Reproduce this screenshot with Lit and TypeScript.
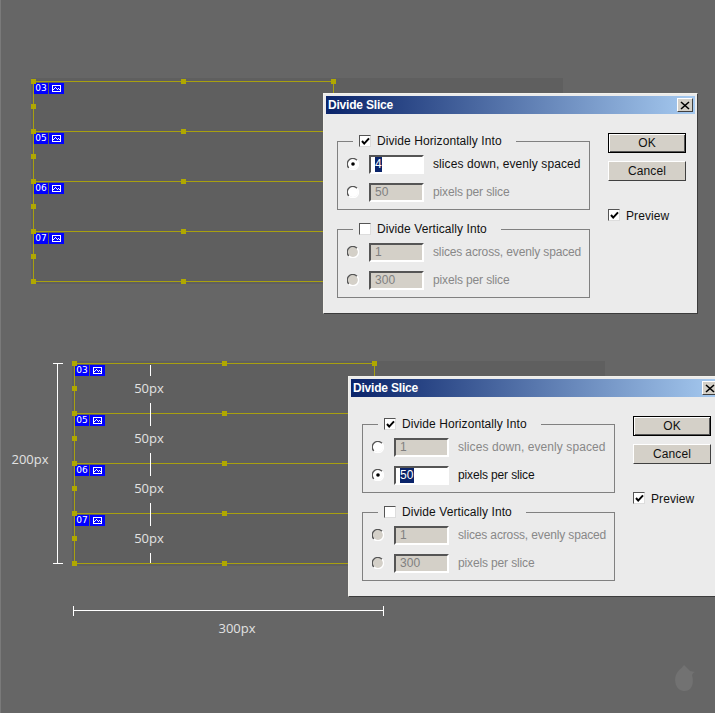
import { LitElement, html, css, svg } from "lit";
import { customElement, property } from "lit/decorators.js";

const SLICES = ["03", "05", "06", "07"];

@customElement("slice-diagram")
class SliceDiagram extends LitElement {
  static styles = css`
    :host { display: block; width: 301px; height: 201px; position: relative; box-sizing: border-box; border: 1px solid #a8a010; border-top: 0; font-family: "DejaVu Sans", sans-serif; }
    .slice { height: 50px; box-sizing: border-box; border-top: 1px solid #a8a010; padding: 1px 0 0 0; display: flex; gap: 1px; align-items: flex-start; }
    .tile { height: 11px; background: #0000ff; color: #fff; display: flex; align-items: center; justify-content: center; }
    .num { width: 14px; font-size: 9px; line-height: 11px; }
    .img { width: 15px; }
    .h { position: absolute; width: 5px; height: 5px; background: #b0a800; }
    svg { display: block; }
  `;
  render() {
    const pts: [number, number][] = [];
    for (let y = 0; y <= 200; y += 50) {
      pts.push([-3, y - 2], [147, y - 2], [297, y - 2]);
      if (y < 200) pts.push([-3, y + 23]);
    }
    return html`
      ${SLICES.map((n) => html`<div class="slice">
        <div class="tile num">${n}</div>
        <div class="tile img"><svg width="9" height="7" viewBox="0 0 9 7" shape-rendering="crispEdges"><rect x=".5" y=".5" width="8" height="6" fill="none" stroke="#fff"/><path d="M1 4h1v1H1zM2 3h1v1H2zM3 2h1v1H3zM4 3h1v1H4zM5 4h1v1H5zM6 3h1v1H6zM7 4h1v1H7z" fill="#fff"/></svg></div>
      </div>`)}
      ${pts.map(([x, y]) => html`<i class="h" style="left:${x}px;top:${y}px"></i>`)}
    `;
  }
}

const check = svg`<path d="M2 5 4.2 7.6 9 2.4" fill="none" stroke="#000" stroke-width="2"/>`;

@customElement("divide-dialog")
class DivideDialog extends LitElement {
  @property({ type: Number }) active = 0;
  @property() value = "4";
  @property() other = "50";

  static styles = css`
    :host { display: block; box-sizing: border-box; width: 375px; height: 221px; padding: 2px; background: #ebebeb; border: 1px solid; border-color: #f2f1ec #3c3c3c #3c3c3c #f2f1ec; font-family: "Liberation Sans", sans-serif; font-size: 12px; letter-spacing: 0.08px; color: #111; }
    .title { height: 18px; box-sizing: border-box; padding: 0 2px 0 2px; display: flex; align-items: center; justify-content: space-between; background: linear-gradient(90deg, #0a246a, #a6caf0); color: #fff; font: bold 12px "Liberation Sans", sans-serif; letter-spacing: -0.2px; }
    .close { width: 16px; height: 14px; box-sizing: border-box; background: #d4d0c8; border: 1px solid; border-color: #fff #404040 #404040 #fff; display: flex; align-items: center; justify-content: center; }
    .body { display: flex; gap: 18px; padding: 20px 0 0 11px; }
    .groups { width: 253px; display: flex; flex-direction: column; gap: 12px; }
    fieldset { margin: 0; padding: 7px 0 7px 9px; border: 1px solid #808080; display: flex; flex-direction: column; gap: 9px; min-width: 0; }
    legend { margin-left: 6px; padding: 0 14px 0 6px; height: 14px; display: flex; align-items: center; gap: 6px; }
    .row { display: flex; align-items: center; height: 19px; }
    .radio { margin: 0 10px 2px 0; display: block; flex: none; }
    .field { width: 55px; height: 19px; box-sizing: border-box; flex: none; margin-right: 9px; border: 2px solid; border-color: #555 #fff #fff #555; background: #d4d0c8; color: #808080; padding: 0 0 0 4px; line-height: 15px; }
    .field.on { background: #fff; color: #000; }
    .sel { background: #0a246a; color: #fff; display: inline-block; }
    .off { color: #888; }
    .lbl { padding-bottom: 1px; }
    .tight { letter-spacing: -0.14px; }
    .box { width: 12px; height: 12px; box-sizing: border-box; flex: none; background: #fff; border: 1px solid; border-color: #555 #ddd #ddd #555; }
    .box svg { display: block; }
    .side { width: 78px; margin-top: -1px; display: flex; flex-direction: column; }
    .btn { height: 20px; box-sizing: border-box; background: #d4d0c8; border: 1px solid; border-color: #fff #404040 #404040 #fff; display: flex; align-items: center; justify-content: center; }
    .btn.def { border: 1px solid #000; box-shadow: inset 1px 1px 0 #fff, inset -1px -1px 0 #555; }
    .cancel { margin-top: 8px; }
    .prev { margin-top: 28px; height: 12px; display: flex; align-items: center; gap: 6px; }
    .prev span:last-child { padding-top: 1px; }
  `;

  private radio(on: boolean, enabled: boolean) {
    return html`<svg class="radio" width="12" height="12" viewBox="0 0 12 12">
      <circle cx="6" cy="6" r="5" fill="${enabled ? "#fff" : "#d4d0c8"}"/>
      <path d="M10 2.2A5.4 5.4 0 0 0 1.8 10" fill="none" stroke="#555" stroke-width="1.3"/>
      <path d="M10 2.2A5.4 5.4 0 0 1 1.8 10" fill="none" stroke="#fff" stroke-width="1.3"/>
      ${on ? svg`<circle cx="6" cy="6" r="1.8" fill="#000"/>` : null}
    </svg>`;
  }
  private box(on: boolean) {
    return html`<span class="box">${on ? html`<svg width="10" height="10" viewBox="0 0 10 10">${check}</svg>` : null}</span>`;
  }
  private row(enabled: boolean, selected: boolean, value: string, label: string, tight = false) {
    return html`<div class="row">
      ${this.radio(selected, enabled)}
      <div class="field ${selected ? "on" : ""}">${selected ? html`<span class="sel">${value}</span>` : value}</div>
      <span class="lbl ${selected ? "" : "off"} ${tight ? "tight" : ""}">${label}</span>
    </div>`;
  }
  render() {
    const a = this.active;
    return html`
      <div class="title"><span>Divide Slice</span>
        <span class="close"><svg width="10" height="9" viewBox="0 0 10 9"><path d="M1 1 9 8M9 1 1 8" stroke="#000" stroke-width="1.6"/></svg></span>
      </div>
      <div class="body">
        <div class="groups">
          <fieldset>
            <legend>${this.box(true)}<span>Divide Horizontally Into</span></legend>
            ${this.row(true, a === 0, a === 0 ? this.value : "1", "slices down, evenly spaced")}
            ${this.row(true, a === 1, a === 1 ? this.value : this.other, "pixels per slice", true)}
          </fieldset>
          <fieldset>
            <legend>${this.box(false)}<span>Divide Vertically Into</span></legend>
            ${this.row(false, false, "1", "slices across, evenly spaced", true)}
            ${this.row(false, false, "300", "pixels per slice", true)}
          </fieldset>
        </div>
        <div class="side">
          <div class="btn def">OK</div>
          <div class="btn cancel">Cancel</div>
          <div class="prev">${this.box(true)}<span>Preview</span></div>
        </div>
      </div>
    `;
  }
}

@customElement("app-root")
class AppRoot extends LitElement {
  static styles = css`
    :host { display: block; position: relative; width: 715px; height: 713px; overflow: hidden; background: #666666; border-left: 1px solid #7a7a7a; box-sizing: border-box; }
    .art { position: absolute; background: #5f5f5f; }
    .a1 { left: 30px; top: 78px; width: 532px; height: 206px; }
    .a2 { left: 71px; top: 361px; width: 533px; height: 205px; }
    .d1, .d2, .dlg1, .dlg2, .note, .dim { position: absolute; }
    .d1 { left: 32px; top: 81px; }
    .d2 { left: 73px; top: 363px; }
    .dlg1 { left: 322px; top: 93px; }
    .dlg2 { left: 347px; top: 376px; }
    .dim { left: 0; top: 0; }
    .note { color: #e2e2e2; font: 13px "Open Sans", sans-serif; line-height: 18px; transform: translate(-50%, -50%); white-space: nowrap; }
    .mark { position: absolute; left: 671px; top: 663px; }
  `;
  render() {
    const labels: [number, number, string][] = [
      [148, 388, "50px"], [148, 438, "50px"], [148, 488, "50px"], [148, 538, "50px"],
      [29, 459, "200px"], [236, 628, "300px"],
    ];
    return html`
      <div class="art a1"></div>
      <div class="art a2"></div>
      <slice-diagram class="d1"></slice-diagram>
      <slice-diagram class="d2"></slice-diagram>
      <svg class="dim" width="715" height="713" fill="none" stroke="#fff" shape-rendering="crispEdges">
        <path d="M56.5 363V564M52 363.5H62M52 563.5H62"/>
        <path d="M149.5 365V376M149.5 403V426M149.5 453V476M149.5 503V526M149.5 553V563"/>
        <path d="M72 610.5H383M72.5 606V616M382.5 606V616"/>
      </svg>
      ${labels.map(([x, y, t]) => html`<div class="note" style="left:${x}px;top:${y}px">${t}</div>`)}
      <svg class="mark" width="24" height="30" viewBox="0 0 24 30">
        <path d="M12 2C10 5 6 7 4 12 2 17 3 28 13 28 21 28 22 18 20 12 21 10 22 9 23 9L18 8C16 6 14 4 12 2Z" fill="#727272"/>
      </svg>
      <divide-dialog class="dlg1" active="0" value="4" other="50"></divide-dialog>
      <divide-dialog class="dlg2" active="1" value="50"></divide-dialog>
    `;
  }
}
